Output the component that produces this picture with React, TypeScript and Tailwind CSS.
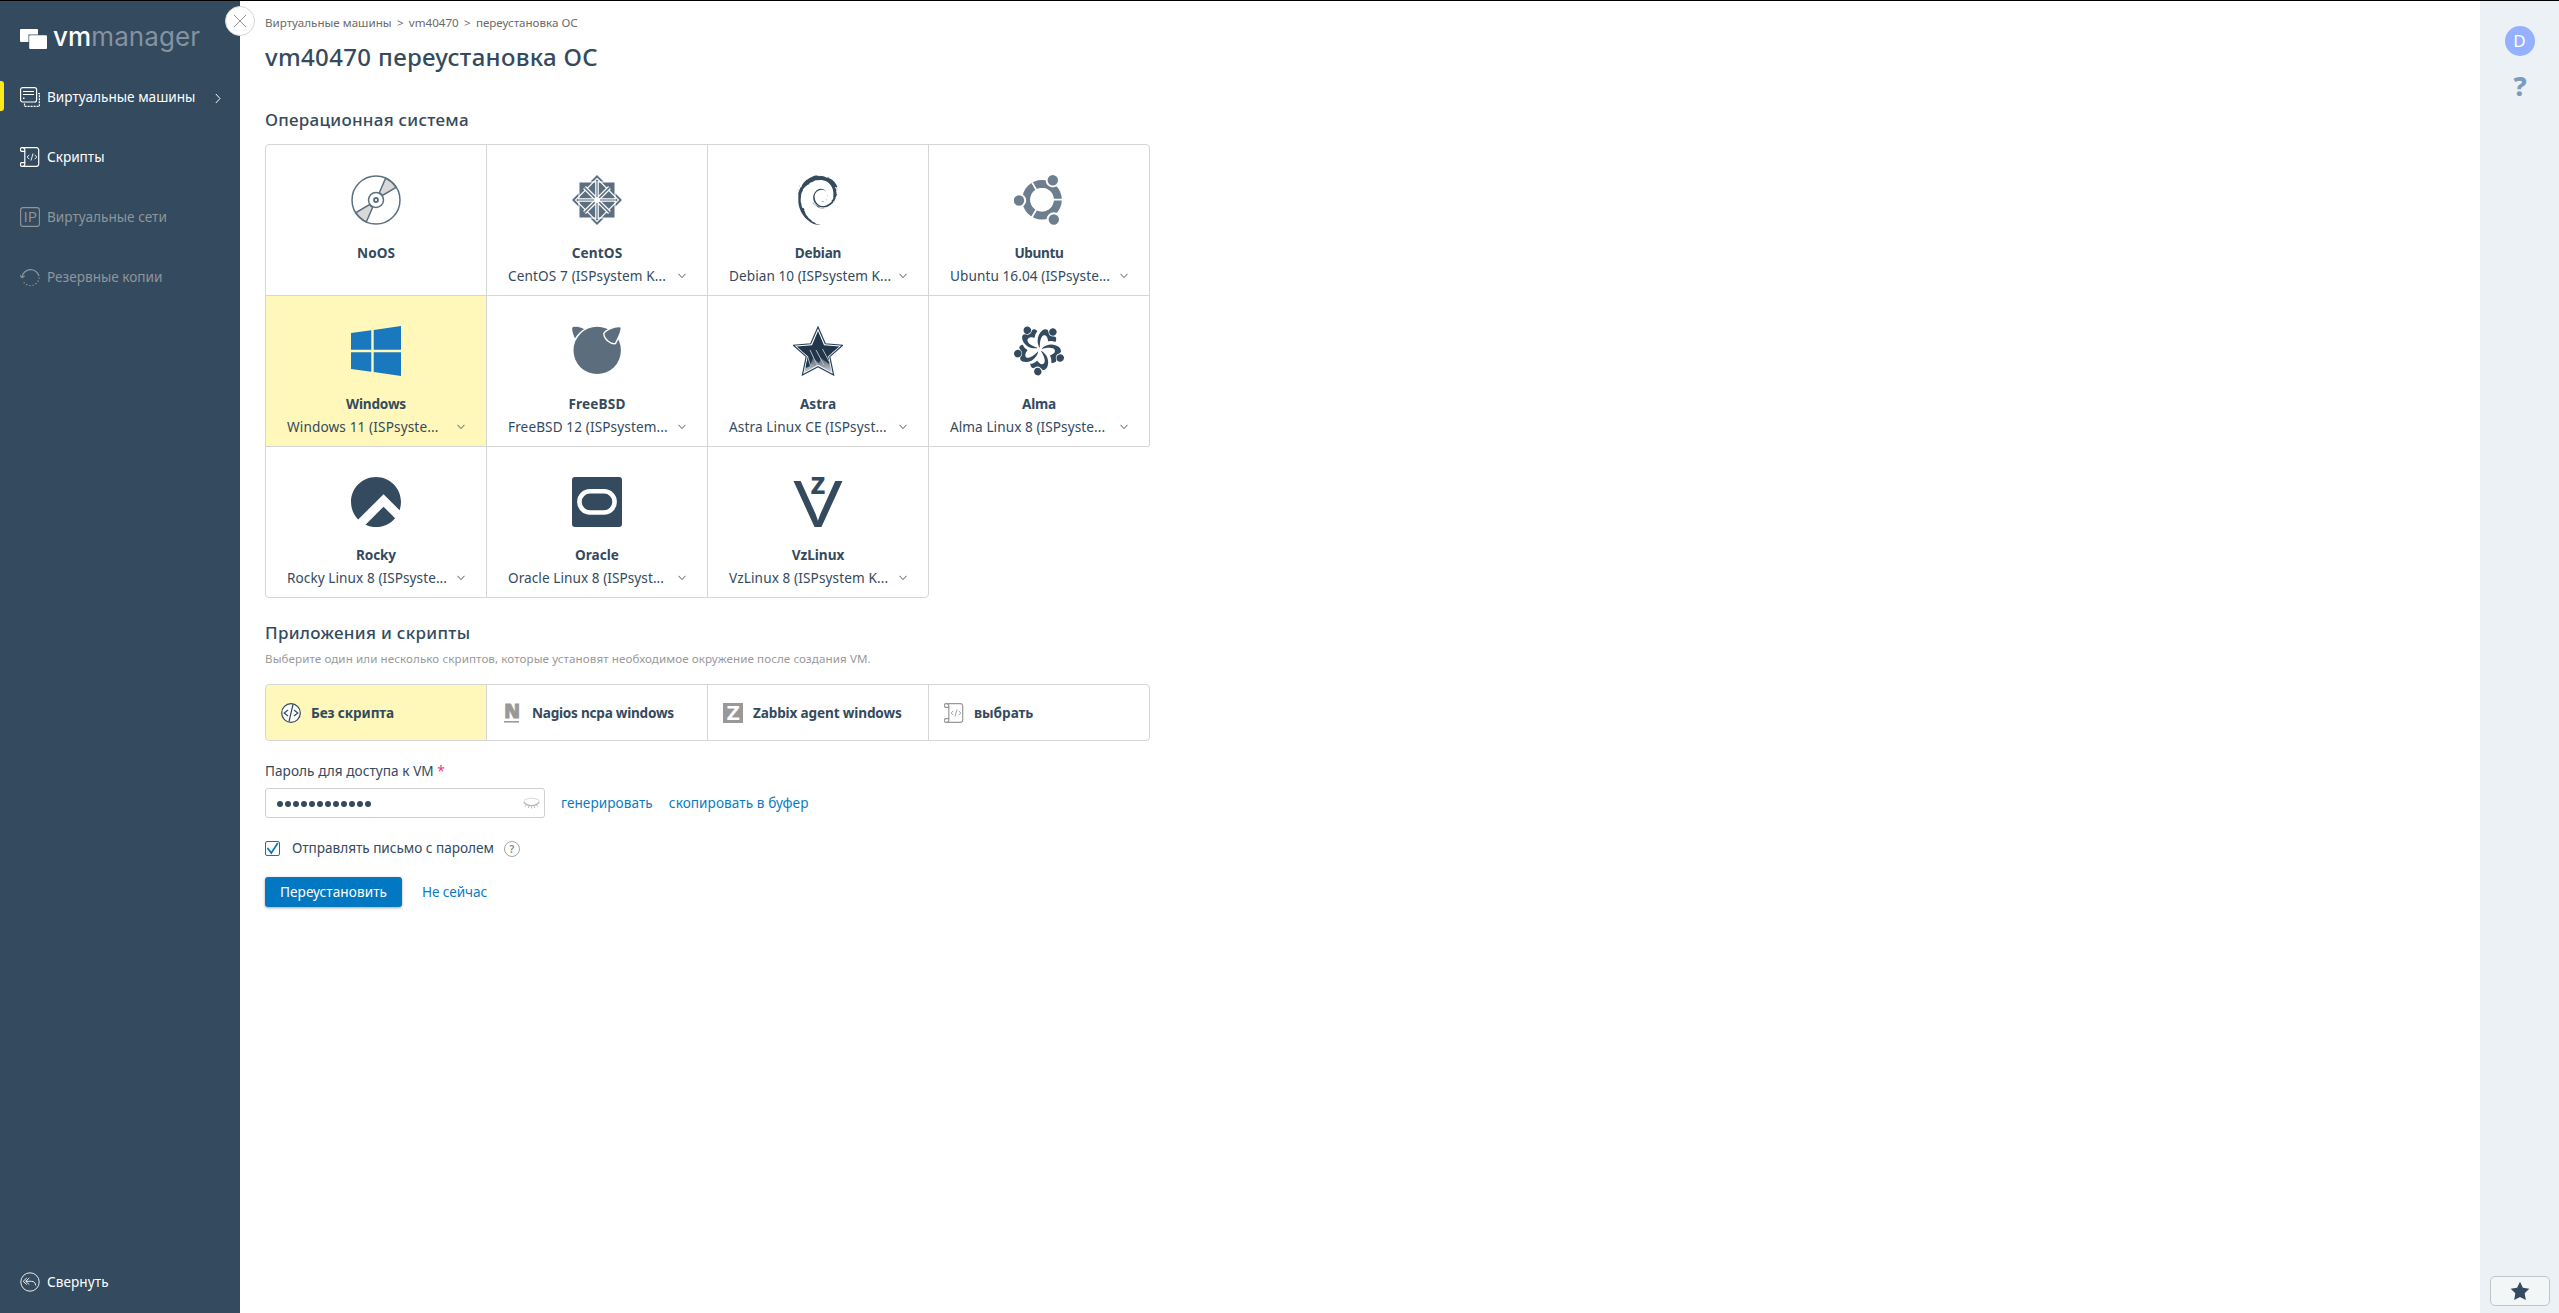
import { useState } from 'react';
import type { ReactNode } from 'react';
import { SiDebian, SiAlmalinux, SiRockylinux } from 'react-icons/si';
import clsx from 'clsx';

type Os = {
  name: string;
  tracking: string;
  version?: string;
  versionTracking?: string;
  icon: ReactNode;
};

/* ---------- OS logos ---------- */

const NoOsIcon = () => (
  <svg width="50" height="50" viewBox="0 0 50 50" fill="none" stroke="#5c6f80" strokeWidth="1.5">
    <circle cx="25" cy="25" r="24" />
    <path d="M28.3 17.8 34.6 3.2A24 24 0 0 1 45 12.4L31.4 20.4A8 8 0 0 0 28.3 17.8z" fill="#d9d9d9" />
    <path d="M21.7 32.2 15.4 46.8A24 24 0 0 1 5 37.6L18.6 29.6A8 8 0 0 0 21.7 32.2z" fill="#d9d9d9" />
    <circle cx="25" cy="25" r="7.5" fill="#fff" />
    <circle cx="25" cy="25" r="2" strokeWidth="1.8" />
  </svg>
);

const CentOsIcon = () => (
  <svg width="50" height="50" viewBox="0 0 50 50" fill="none">
    <path d="M25 0 50 25 25 50 0 25z" fill="#5c6f80" />
    <path d="M6.5 6.5h37v37h-37z" fill="#fff" />
    <path d="M7.5 7.5h35v35h-35z" fill="#5c6f80" />
    <path d="M25 3.5 46.5 25 25 46.5 3.5 25z" stroke="#fff" strokeWidth="1.1" />
    <path d="M12.5 12.5 37.5 37.5M37.5 12.5 12.5 37.5" stroke="#fff" strokeWidth="4" />
    <path d="M12.5 12.5 37.5 37.5M37.5 12.5 12.5 37.5" stroke="#5c6f80" strokeWidth="1.7" />
    <path d="M25 6v38M6 25h38" stroke="#fff" strokeWidth="3.6" />
    <path d="M25 6v38M6 25h38" stroke="#8b98a5" strokeWidth="1.6" />
    <circle cx="25" cy="25" r="3" fill="#fff" />
  </svg>
);

const UbuntuIcon = () => (
  <svg width="50" height="50" viewBox="0 0 50 50" fill="none">
    <circle cx="28" cy="24.7" r="15.8" stroke="#6d7f8e" strokeWidth="8" />
    <path d="M28 24.7h22M28 24.7 17 5.6M28 24.7 17 43.8" stroke="#fff" strokeWidth="1.8" />
    <circle cx="28" cy="24.7" r="11.6" fill="#fff" />
    <g fill="#6d7f8e" stroke="#fff" strokeWidth="2">
      <circle cx="5" cy="25.5" r="6.2" />
      <circle cx="38.8" cy="5.2" r="6.2" />
      <circle cx="39.8" cy="44.5" r="6.2" />
    </g>
  </svg>
);

const WindowsIcon = () => (
  <svg width="50" height="50" viewBox="0 0 50 50" fill="#1a78be">
    <path d="M0 7 20.3 4.3V23.7H0zM22.7 4 50 0v23.7H22.7zM0 26.2h20.3v19.5L0 43zM22.7 26.2H50V50l-27.3-4z" />
  </svg>
);

const FreeBsdIcon = () => (
  <svg width="50" height="50" viewBox="0 0 50 50" fill="#5c6d7e">
    <circle cx="25.2" cy="24.4" r="23.7" />
    <path d="M0 1C3-.8 9.5.8 12.8 3.2 8.5 5.5 5 9 3.2 13.2 1 10-1 4 0 1z" stroke="#fff" strokeWidth="1" />
    <path d="M49 .8C43-.5 32.5 4.5 31.8 7.8 32 13 38.5 18.5 43.5 17.6 45.5 13 50.5 5 49 .8z" stroke="#fff" strokeWidth="1.4" />
  </svg>
);

const AstraIcon = () => (
  <svg width="50" height="50" viewBox="0 0 50 50">
    <defs>
      <linearGradient id="astra" x1="0" y1="0" x2="0" y2="1">
        <stop offset="0.45" stopColor="#21364a" />
        <stop offset="0.7" stopColor="#64717f" />
        <stop offset="1" stopColor="#cfd3d8" />
      </linearGradient>
      <clipPath id="astra-star">
        <path d="M25 5 31 19.3 46.3 20.5 35 30.3 38.8 46.5 25 38.8 11.2 46.5 15 30.3 3.7 20.5 19 19.3z" />
      </clipPath>
    </defs>
    <path d="M25 1 32.3 17.8 49.6 19.2 36.8 30.6 40.6 49 25 40.8 9.4 49 13.2 30.6.4 19.2 17.7 17.8z" fill="#fff" stroke="#2b4056" strokeWidth="1.2" />
    <path d="M25 5 31 19.3 46.3 20.5 35 30.3 38.8 46.5 25 38.8 11.2 46.5 15 30.3 3.7 20.5 19 19.3z" fill="url(#astra)" />
    <g clipPath="url(#astra-star)">
      <path d="M8 22h32L38 30 36 38 28 32 26 37 20 32 17 40 13 42z" fill="#21364a" />
      <path d="M14.5 30 17.5 40M17 24 24 39M23 24l8 15M29.5 23l8 15" stroke="#c3c9cf" strokeWidth="0.9" />
    </g>
  </svg>
);

const OracleIcon = () => (
  <svg width="50" height="50" viewBox="0 0 50 50">
    <rect width="50" height="50" rx="3" fill="#344a5e" />
    <rect x="7.4" y="14.3" width="35.2" height="21.2" rx="10.6" fill="none" stroke="#fff" strokeWidth="4.6" />
  </svg>
);

const VzIcon = () => (
  <svg width="50" height="50" viewBox="0 0 50 50" fill="#344a5e" className="overflow-visible font-['Open_Sans']">
    <text x="0.5" y="50" fontSize="64.5" fontWeight="500" textLength="49" lengthAdjust="spacingAndGlyphs">V</text>
    <text x="17.6" y="16.6" fontSize="30.5" fontWeight="700" textLength="15" lengthAdjust="spacingAndGlyphs">z</text>
  </svg>
);

/* ---------- small interface icons ---------- */

const ScrollIcon = ({ className }: { className?: string }) => (
  <svg width="20" height="20" viewBox="0 0 20 20" fill="none" stroke="currentColor" strokeWidth="1.2" className={className}>
    <path d="M2.6.7H16.5A2.2 2.2 0 0 1 18.7 2.9V17.1A2.2 2.2 0 0 1 16.5 19.3H2.6M4.8 4.4V15.6" />
    <path d="M4.8 4.4H1.8A1.8 1.8 0 0 1 2.6.7 2 2 0 0 1 4.8 2.7zM4.8 15.6H1.8A1.8 1.8 0 0 0 2.6 19.3 2 2 0 0 0 4.8 17.3z" />
    <path d="M9.3 7.8 7.2 10l2.1 2.2M14.7 7.8 16.8 10l-2.1 2.2M13 6.5 11 13.5" strokeWidth="0.9" />
  </svg>
);

const ServerIcon = () => (
  <svg width="20" height="20" viewBox="0 0 20 20" fill="none" stroke="currentColor" strokeWidth="1.2">
    <rect x="0.6" y="0.6" width="16" height="14.4" rx="2" />
    <path d="M3 4.5h11M3 7.5h11" />
    <path d="M3 11.3h1.5" strokeWidth="1.6" />
    <path d="M4.5 16.5v2.9h14.9V6.5H17.5" strokeDasharray="2 1" />
  </svg>
);

const IpIcon = () => (
  <svg width="20" height="20" viewBox="0 0 20 20" fill="none" className="overflow-visible font-['Open_Sans']">
    <rect x="0.6" y="0.6" width="18.8" height="18.8" rx="2.5" stroke="currentColor" strokeWidth="1.1" />
    <text x="3.4" y="15.3" fontSize="15" fill="currentColor" textLength="13.6" lengthAdjust="spacingAndGlyphs">IP</text>
  </svg>
);

const BackupIcon = () => (
  <svg width="20" height="20" viewBox="0 0 20 20" fill="none" stroke="currentColor" strokeWidth="1.2">
    <path d="M2 10.2A8.7 8.7 0 0 1 19 9" />
    <path d="M19.2 10.5A8.7 8.7 0 0 1 3.5 15" strokeDasharray="1.3 1.9" />
    <path d="M.2 8.3 2 10.7 4.6 8.8" />
  </svg>
);

const CollapseIcon = () => (
  <svg width="20" height="20" viewBox="0 0 20 20" fill="none" stroke="currentColor" strokeWidth="0.9">
    <circle cx="10" cy="10" r="9.2" />
    <path d="M6.8 6 3.2 9.3l3.6 3.3M9.3 6 5.7 9.3l3.6 3.3M5.9 9.3h5.6c2.6 0 4 1.7 4.2 4.2" />
  </svg>
);

const NoScriptIcon = () => (
  <svg width="20" height="20" viewBox="0 0 20 20" fill="none" stroke="#344a5e" strokeWidth="1.2">
    <circle cx="10" cy="10" r="9.3" fill="#fff" />
    <path d="M7 7 3.2 10 7 13M13 7l3.8 3L13 13M12 1.5 8 18.5" />
  </svg>
);

const NagiosIcon = () => (
  <svg width="18" height="20" viewBox="0 0 18 20" fill="#999" stroke="#999" className="overflow-visible font-['Open_Sans']">
    <text x="1.3" y="15" fontSize="20" fontWeight="800" strokeWidth="1" textLength="15.5" lengthAdjust="spacingAndGlyphs">N</text>
    <path d="M1 18.8h15" strokeWidth="1.6" />
  </svg>
);

const ZabbixIcon = () => (
  <svg width="20" height="20" viewBox="0 0 20 20" className="overflow-visible font-['Open_Sans']">
    <rect width="20" height="20" fill="#999" />
    <text x="3.7" y="17" fontSize="19" fill="#fff" textLength="12.8" lengthAdjust="spacingAndGlyphs">Z</text>
  </svg>
);

const ClosedEyeIcon = () => (
  <svg width="17" height="13" viewBox="0 0 17 13" fill="none" stroke="#b5b5b5" strokeWidth="0.9">
    <path d="M.7 3.8C4 .4 13 .4 16.3 3.8" stroke="#d0d0d0" />
    <path d="M.7 4.8C4 9.8 13 9.8 16.3 4.8" strokeWidth="1.3" />
    <path d="M3.3 7.8 2.2 9.4M6 9l-.6 2M8.5 9.3v2.2M11 9l.6 2M13.7 7.8l1.1 1.6" />
  </svg>
);

const Chevron = () => (
  <svg width="8" height="6" viewBox="0 0 8 6" fill="none" stroke="#344a5e" strokeWidth="0.9" className="shrink-0">
    <path d="M.5.8 4 4.6 7.5.8" />
  </svg>
);

/* ---------- data ---------- */

const systems: Os[] = [
  { name: 'NoOS', tracking: 'tracking-normal', icon: <NoOsIcon /> },
  { name: 'CentOS', tracking: 'tracking-[0.12px]', version: 'CentOS 7 (ISPsystem K...', versionTracking: 'tracking-[0.13px]', icon: <CentOsIcon /> },
  { name: 'Debian', tracking: 'tracking-[-0.2px]', version: 'Debian 10 (ISPsystem K...', versionTracking: 'tracking-[0.06px]', icon: <SiDebian className="size-[50px]" /> },
  { name: 'Ubuntu', tracking: 'tracking-[-0.35px]', version: 'Ubuntu 16.04 (ISPsyste...', versionTracking: 'tracking-[0.08px]', icon: <UbuntuIcon /> },
  { name: 'Windows', tracking: 'tracking-[-0.2px]', version: 'Windows 11 (ISPsyste...', versionTracking: 'tracking-[0.13px]', icon: <WindowsIcon /> },
  { name: 'FreeBSD', tracking: 'tracking-[0.16px]', version: 'FreeBSD 12 (ISPsystem...', versionTracking: 'tracking-[0.11px]', icon: <FreeBsdIcon /> },
  { name: 'Astra', tracking: 'tracking-normal', version: 'Astra Linux CE (ISPsyst...', versionTracking: 'tracking-[0.12px]', icon: <AstraIcon /> },
  { name: 'Alma', tracking: 'tracking-[-0.2px]', version: 'Alma Linux 8 (ISPsyste...', versionTracking: 'tracking-[0.07px]', icon: <SiAlmalinux className="size-[50px]" /> },
  { name: 'Rocky', tracking: 'tracking-[-0.15px]', version: 'Rocky Linux 8 (ISPsyste...', versionTracking: 'tracking-[0.07px]', icon: <SiRockylinux className="size-[50px]" /> },
  { name: 'Oracle', tracking: 'tracking-normal', version: 'Oracle Linux 8 (ISPsyst...', versionTracking: 'tracking-[0.06px]', icon: <OracleIcon /> },
  { name: 'VzLinux', tracking: 'tracking-normal', version: 'VzLinux 8 (ISPsystem K...', versionTracking: 'tracking-[0.11px]', icon: <VzIcon /> },
];

const scripts = [
  { name: 'Без скрипта', icon: <NoScriptIcon />, className: 'pl-[15px] gap-[10px] tracking-[-0.12px]' },
  { name: 'Nagios ncpa windows', icon: <NagiosIcon />, className: 'pl-[16px] gap-[11px] tracking-[-0.25px]' },
  { name: 'Zabbix agent windows', icon: <ZabbixIcon />, className: 'pl-[15px] gap-[10px] tracking-[-0.15px]' },
  { name: 'выбрать', icon: <ScrollIcon className="text-[#999]" />, className: 'pl-[15px] gap-[10px] tracking-[-0.05px]' },
];

const nav = [
  { name: 'Виртуальные машины', icon: <ServerIcon />, active: true },
  { name: 'Скрипты', icon: <ScrollIcon /> },
  { name: 'Виртуальные сети', icon: <IpIcon />, disabled: true },
  { name: 'Резервные копии', icon: <BackupIcon />, disabled: true },
];

/* ---------- layout ---------- */

function Sidebar() {
  return (
    <aside className="relative w-60 shrink-0 bg-[#344a5e] text-white flex flex-col">
      <div className="h-[66px] flex items-start pl-5">
        <svg width="27" height="20" viewBox="0 0 27 20" fill="#fff" className="mt-7">
          <path d="M1 0h16a1 1 0 0 1 1 1v4.5H8.5V13H1a1 1 0 0 1-1-1V1a1 1 0 0 1 1-1z" />
          <rect x="9.2" y="6.3" width="17.8" height="13.7" rx="1" />
        </svg>
        <span className="mt-[21px] ml-1.5 font-['Inter'] text-[26px] leading-[30px] tracking-[0.1px]">
          <span className="font-medium">vm</span>
          <span className="text-[#8592a0]">manager</span>
        </span>
      </div>

      <nav className="flex flex-col">
        {nav.map((item) => (
          <a
            key={item.name}
            href="#"
            className={clsx('relative h-[60px] pl-5 flex items-center gap-[7px]', item.disabled && 'text-[#8f959b]')}
          >
            {item.active && <span className="absolute left-0 top-[14px] w-1 h-[30px] rounded-r-[3px] bg-[#fee91b]" />}
            {item.icon}
            {item.name}
            {item.active && (
              <svg width="6" height="11" viewBox="0 0 6 11" fill="none" stroke="currentColor" className="absolute right-[19px] top-[26px]">
                <path d="M.8 1 5 5.5.8 10" />
              </svg>
            )}
          </a>
        ))}
      </nav>

      <button className="mt-auto h-[62px] pl-5 flex items-center gap-[7px] tracking-[0.06px]">
        <CollapseIcon />
        Свернуть
      </button>

      <button className="absolute z-10 left-[225px] top-[5px] size-[30px] rounded-full bg-white border border-[#d6d6d6] flex items-center justify-center">
        <svg width="14" height="14" viewBox="0 0 14 14" stroke="#8a8a8a" strokeWidth="0.9">
          <path d="M1 1 13 13M13 1 1 13" />
        </svg>
      </button>
    </aside>
  );
}

function OsCard({ os, selected, corner, onSelect }: { os: Os; selected: boolean; corner: string; onSelect: () => void }) {
  return (
    <div
      onClick={onSelect}
      className={clsx(
        '-mr-px -mb-px border border-[#d6d6d6] pt-[30px] px-[21px] flex flex-col items-stretch cursor-pointer',
        corner,
        selected && 'bg-[#fff8ba]'
      )}
    >
      <div className="flex justify-center">{os.icon}</div>
      <p className={clsx('mt-[18px] text-center font-bold', os.tracking)}>{os.name}</p>
      {os.version && (
        <div className="mt-[3px] flex items-center justify-between">
          <span className={clsx('whitespace-nowrap', os.versionTracking)}>{os.version}</span>
          <Chevron />
        </div>
      )}
    </div>
  );
}

const osCorners: Record<string, string> = {
  NoOS: 'rounded-tl-[4px]',
  Ubuntu: 'rounded-tr-[4px]',
  Alma: 'rounded-br-[2px]',
  Rocky: 'rounded-bl-[4px]',
  VzLinux: 'rounded-br-[4px]',
};

export default function App() {
  const [os, setOs] = useState('Windows');
  const [script, setScript] = useState('Без скрипта');
  const [sendMail, setSendMail] = useState(true);

  return (
    <div className="h-screen border-t border-black bg-white flex font-['Noto_Sans','Open_Sans',sans-serif] text-[13.6px] leading-5 text-[#344a5e] overflow-hidden">
      <Sidebar />

      <main className="flex-1 pl-[25px] pt-3">
        <div className="flex text-[11.6px] text-[#6b6b6b] whitespace-pre">
          <span>Виртуальные машины</span>
          <span className="tracking-[-0.3px]">{'  >  '}</span>
          <span>vm40470</span>
          <span className="tracking-[-0.3px]">{'  >  '}</span>
          <span>переустановка ОС</span>
        </div>
        <h1 className="mt-2 text-[24px] leading-8 font-medium tracking-[0.34px]">vm40470 переустановка ОС</h1>

        <h2 className="mt-[35px] text-[17px] leading-6 font-medium tracking-[0.26px]">Операционная система</h2>
        <div className="mt-3 grid grid-cols-[repeat(4,221px)] auto-rows-[151px]">
          {systems.map((s) => (
            <OsCard key={s.name} os={s} selected={s.name === os} corner={osCorners[s.name] ?? ''} onSelect={() => setOs(s.name)} />
          ))}
        </div>

        <h2 className="mt-6 text-[17px] leading-6 font-medium tracking-[0.32px]">Приложения и скрипты</h2>
        <p className="mt-1 text-[11.6px] text-[#999] tracking-[0.09px]">
          Выберите один или несколько скриптов, которые установят необходимое окружение после создания VM.
        </p>
        <div className="mt-[15px] grid grid-cols-[repeat(4,221px)] auto-rows-[56px]">
          {scripts.map((s, i) => (
            <div
              key={s.name}
              onClick={() => setScript(s.name)}
              className={clsx(
                '-mr-px -mb-px border border-[#d6d6d6] flex items-center font-bold cursor-pointer',
                s.className,
                i === 0 && 'rounded-l-[4px]',
                i === scripts.length - 1 && 'rounded-r-[4px]',
                s.name === script && 'bg-[#fff8ba]'
              )}
            >
              {s.icon}
              {s.name}
            </div>
          ))}
        </div>

        <label className="mt-[21px] block tracking-[0.05px]">
          Пароль для доступа к VM <span className="text-[#e5398d]">*</span>
        </label>
        <div className="mt-[7px] flex items-center gap-4 text-[#0a7bc2]">
          <div className="w-[280px] h-[30px] border border-[#d0d0d0] rounded-[3px] pl-[11px] pr-1 flex items-center justify-between">
            <span className="flex gap-[2px]">
              {Array.from({ length: 12 }, (_, i) => (
                <i key={i} className="size-[6px] rounded-full bg-[#344a5e] mt-px" />
              ))}
            </span>
            <ClosedEyeIcon />
          </div>
          <a href="#" className="tracking-[0.07px]">генерировать</a>
          <a href="#" className="tracking-[0.07px]">скопировать в буфер</a>
        </div>

        <div className="mt-[19px] h-[22px] flex items-center">
          <button
            onClick={() => setSendMail(!sendMail)}
            className="size-[15px] rounded-[2px] border border-[#0277c2] flex items-center justify-center"
          >
            {sendMail && (
              <svg width="13" height="13" viewBox="0 0 13 13" fill="none" stroke="#0277c2" strokeWidth="1.7">
                <path d="M1.5 6 5.3 11 11.8 1" />
              </svg>
            )}
          </button>
          <span className="ml-3 tracking-[-0.03px]">Отправлять письмо с паролем</span>
          <span className="ml-[10px] mt-px size-4 rounded-full border border-[#a5a5a5] text-[#8a8a8a] text-[11px] leading-[14px] font-semibold text-center">?</span>
        </div>

        <div className="mt-[18px] flex items-center gap-5">
          <button className="w-[137px] h-[30px] rounded-[3px] bg-[#0277c2] text-white tracking-[0.06px] shadow-[0_1px_3px_rgba(0,0,0,0.35)]">Переустановить</button>
          <button className="text-[#0a7bc2] tracking-[-0.1px]">Не сейчас</button>
        </div>
      </main>

      <aside className="w-[79px] shrink-0 bg-[#ebf1f4] flex flex-col items-center pt-[25px] pb-[7px]">
        <span className="size-[30px] rounded-full bg-[#94b0ff] text-white text-[17px] leading-[30px] text-center">D</span>
        <span className="mt-[15px] ml-px text-[27px] leading-[30px] font-extrabold text-[#7c9cbc]">?</span>
        <button className="mt-auto w-[60px] h-[30px] rounded-[5px] border border-[#bfc5ca] bg-[#f3f6f7] flex items-center justify-center">
          <svg width="20" height="20" viewBox="0 0 20 20" fill="#344a5e">
            <path d="M10 .8 12.9 6.8 19.3 7.7 14.7 12.3 15.8 19 10 15.9 4.2 19 5.3 12.3.7 7.7 7.1 6.8z" />
          </svg>
        </button>
      </aside>
    </div>
  );
}
